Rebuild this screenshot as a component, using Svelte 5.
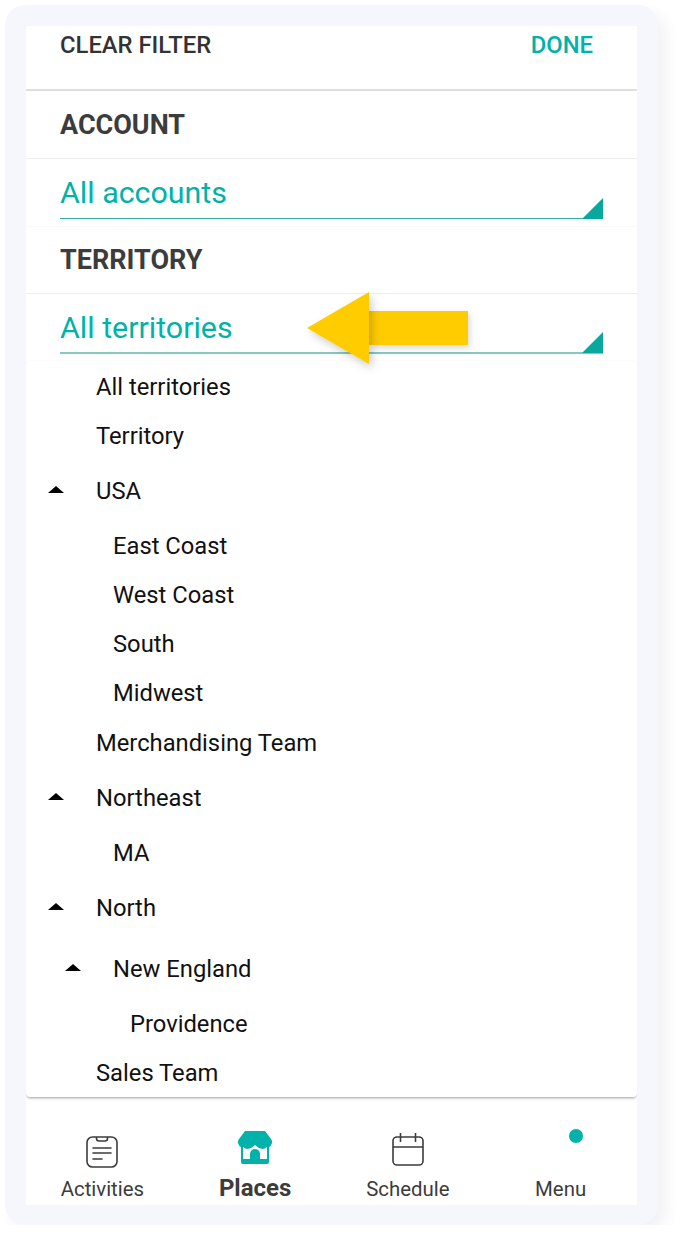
<script lang="ts">
  // Filter panel with the territory dropdown open
  const territories = [
    { label: "All territories", depth: 0 },
    { label: "Territory", depth: 0 },
    { label: "USA", depth: 0, caret: true },
    { label: "East Coast", depth: 1 },
    { label: "West Coast", depth: 1 },
    { label: "South", depth: 1 },
    { label: "Midwest", depth: 1 },
    { label: "Merchandising Team", depth: 0 },
    { label: "Northeast", depth: 0, caret: true },
    { label: "MA", depth: 1 },
    { label: "North", depth: 0, caret: true },
    { label: "New England", depth: 1, caret: true },
    { label: "Providence", depth: 2 },
    { label: "Sales Team", depth: 0 }
  ];
</script>

<div class="frame">
  <div class="screen">
    <header class="top">
      <span class="clear">CLEAR FILTER</span>
      <span class="done">DONE</span>
    </header>

    <div class="section-title first">ACCOUNT</div>
    <div class="select">
      <div class="select-line"><span>All accounts</span><i class="corner"></i></div>
    </div>

    <div class="section-title">TERRITORY</div>
    <div class="select open">
      <div class="select-line"><span>All territories</span><i class="corner"></i></div>
    </div>

    <ul class="dropdown">
      {#each territories as item}
        <li class="row" class:has-caret={item.caret} style="padding-left: {70 + item.depth * 17}px">
          {#if item.caret}<i class="caret"></i>{/if}
          {item.label}
        </li>
      {/each}
    </ul>

    <nav class="tabs">
      <div class="tab">
        <svg width="34" height="34" viewBox="0 0 34 34" fill="none" stroke="#3c3c3c" stroke-width="1.6">
          <rect x="2" y="2" width="30" height="30" rx="5.5" />
          <path d="M11.500 2v1.500a2.500 2.500 0 0 0 2.500 2.500h6a2.500 2.500 0 0 0 2.500-2.500V2" />
          <path d="M8 13h18M8 18h18M8 24h9" stroke-linecap="round" />
        </svg>
        <span>Activities</span>
      </div>
      <div class="tab active">
        <svg width="34" height="34" viewBox="0 0 34 34" fill="#00b2a9">
          <path d="M7 0h20l6 8q1.500 2 1 4-1 3.500-3 4v15a2 2 0 0 1-2 2H5a2 2 0 0 1-2-2V16q-2-.5-3-4-.5-2 1-4z" />
          <path fill="#fff" d="M5 16c2 2 5 2.500 6.500 1.500 1.500-.5 4-2 5.500-3.500 1.500 1.500 4 3 5.500 3.500 1.500 1 4.500.5 6.500-1.500v12H5z" />
          <path d="M12 28v-5a5 5 0 0 1 10 0v5z" />
        </svg>
        <span>Places</span>
      </div>
      <div class="tab">
        <svg width="34" height="34" viewBox="0 0 34 34" fill="none" stroke="#3c3c3c" stroke-width="1.6">
          <rect x="2" y="2" width="30" height="28" rx="4" />
          <path d="M2 12h30M9.500 -2v9M24.500 -2v9" />
        </svg>
        <span>Schedule</span>
      </div>
      <div class="tab">
        <div class="icon-space"><i class="dot"></i></div>
        <span>Menu</span>
      </div>
    </nav>
  </div>

  <svg class="arrow" width="181" height="92" viewBox="0 0 181 92">
    <path class="shaft" d="M72 21h99v34H72z" />
    <path class="head" d="M10 38 72 2v72z" />
  </svg>
</div>

<style>
  :global(body) {
    margin: 0;
    background: #fff;
  }

  .frame {
    position: relative;
    box-sizing: border-box;
    width: 653px;
    height: 1220px;
    margin: 5px 0 0 5px;
    padding: 21px;
    background: #f5f7fc;
    border-radius: 20px;
    box-shadow: 8px 8px 14px rgba(60, 70, 110, 0.07);
    font-family: Roboto, "Liberation Sans", sans-serif;
  }

  .screen {
    display: flex;
    flex-direction: column;
    height: 1179px;
    background: #fff;
    overflow: hidden;
  }

  .top {
    display: flex;
    justify-content: space-between;
    box-sizing: border-box;
    height: 65px;
    padding: 4px 44px 0 34px;
    border-bottom: 2px solid #dfdfe3;
    font-size: 23.8px;
    font-weight: 500;
    line-height: 30px;
    color: #333;
  }

  .done {
    color: #00b2a9;
  }

  .section-title {
    box-sizing: border-box;
    height: 68px;
    padding: 15px 34px 0;
    border-bottom: 1px solid #eeeeef;
    font-size: 27px;
    font-weight: 700;
    line-height: 36px;
    color: #3c3c3c;
  }

  .section-title.first {
    padding-top: 16px;
  }

  .section-title:not(.first) {
    border-top: 1px solid #fafafa;
  }

  .select {
    box-sizing: border-box;
    height: 67px;
    padding: 0 34px;
  }

  .select.open {
    height: 68px;
  }

  .select-line {
    position: relative;
    box-sizing: border-box;
    height: 60px;
    padding-top: 16px;
    border-bottom: 1px solid #36ada5;
    font-size: 30.4px;
    line-height: 36px;
    color: #00b2a9;
  }

  .select.open .select-line {
    border-bottom: 2px solid #84c8c2;
  }

  .corner {
    position: absolute;
    right: 0;
    bottom: -1px;
    width: 21px;
    height: 21px;
    background: #08a89e;
    clip-path: polygon(100% 0, 100% 100%, 0 100%);
  }

  .dropdown {
    flex: none;
    list-style: none;
    margin: -1px 0 0;
    padding: 1px 0 0;
    background: #fff;
    border-radius: 4px;
    box-shadow: 0 2px 3px -1px rgba(0, 0, 0, 0.38), 0 0 2px rgba(0, 0, 0, 0.05);
  }

  .row {
    position: relative;
    box-sizing: border-box;
    height: 49.1px;
    font-size: 23.75px;
    line-height: 51px;
    color: #111;
  }

  .row.has-caret {
    height: 61px;
    line-height: 62px;
  }

  .caret {
    display: inline-block;
    position: absolute;
    width: 0;
    height: 0;
    margin-left: -48px;
    margin-top: 26px;
    border-left: 8px solid transparent;
    border-right: 8px solid transparent;
    border-bottom: 7px solid #000;
  }

  .tabs {
    display: grid;
    grid-template-columns: repeat(4, 1fr);
    flex: 1;
    padding-top: 38px;
  }

  .tab {
    display: flex;
    flex-direction: column;
    align-items: center;
    gap: 6px;
    font-size: 20.4px;
    line-height: 28px;
    color: #3c3c3c;
  }

  .tab.active {
    font-size: 24px;
    font-weight: 700;
    gap: 9px;
    margin-top: -4px;
  }

  .tab svg {
    display: block;
    overflow: visible;
  }

  .icon-space {
    position: relative;
    width: 34px;
    height: 34px;
  }

  .dot {
    position: absolute;
    left: 25px;
    top: -6px;
    width: 14px;
    height: 14px;
    border-radius: 50%;
    background: #00b2a9;
  }

  .arrow {
    position: absolute;
    left: 292px;
    top: 285px;
  }

  .shaft {
    fill: #ffcc00;
    filter: drop-shadow(2px 3px 3px rgba(0, 0, 0, 0.14));
  }

  .head {
    fill: #ffcc00;
    filter: drop-shadow(3px 4px 4px rgba(0, 0, 0, 0.2));
  }
</style>
